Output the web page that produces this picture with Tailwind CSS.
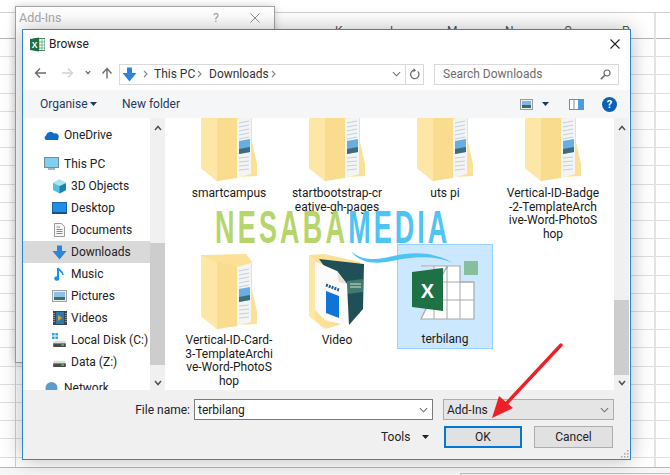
<!DOCTYPE html>
<html>
<head>
<meta charset="utf-8">
<script src="https://cdn.jsdelivr.net/npm/@tailwindcss/browser@4"></script>
</head>
<body class="m-0 bg-white">
<svg class="hidden" width="0" height="0">
  <defs>
    <symbol id="folder" viewBox="0 0 56 75">
      <path d="M0 1 L45 0 L51 8 V36 L56 58 V70 L38 71 L16 75 L0 62Z" fill="#fbe096"/>
      <path d="M36 13 L50 9 V68 L36 72Z" fill="#f4f4f4"/>
      <path d="M38 17 L48 15 M38 21 L48 19 M38 25 L48 23 M38 29 L48 27 M38 33 L48 31 M38 52 L48 51 M38 56 L48 55 M38 60 L48 59 M38 64 L48 63" stroke="#bcd2e4" stroke-width="1"/>
      <path d="M38 35 L49 33 V46 L38 48Z" fill="#69aee0"/>
      <path d="M38 43 L49 41 V46 L38 48Z" fill="#3d6c7c"/>
      <path d="M0 1 L16 8 V75 L0 62Z" fill="#fde6a6"/>
      <path d="M8 5 L36 13 V72 L16 75 V8Z" fill="#f9dc8e"/>
    </symbol>
    <symbol id="disk" viewBox="0 0 16 10">
      <path d="M2 3 H14 L15 5 V9 H1 V5Z" fill="#dcdcdc"/>
      <rect x="1" y="6" width="14" height="4" fill="#4a4a4a"/>
      <rect x="10" y="7" width="3" height="1.5" fill="#57d65f"/>
    </symbol>
    <symbol id="chevup" viewBox="0 0 8 6"><path d="M1 5 L4 1.5 L7 5" fill="none" stroke="#505050" stroke-width="1.5"/></symbol>
    <symbol id="chevdown" viewBox="0 0 8 6"><path d="M1 1 L4 4.5 L7 1" fill="none" stroke="#505050" stroke-width="1.5"/></symbol>
    <symbol id="chevthin" viewBox="0 0 10 6"><path d="M1 1 L5 5 L9 1" fill="none" stroke="#707070" stroke-width="1.2"/></symbol>
    <symbol id="crumb" viewBox="0 0 5 8"><path d="M1 1 L4 4 L1 7" fill="none" stroke="#8a8a8a" stroke-width="1.2"/></symbol>
  </defs>
</svg>

<div class="relative w-[670px] h-[475px] overflow-hidden bg-white font-['Roboto',sans-serif] text-[12px] text-[#222]">

  <!-- spreadsheet behind the dialogs -->
  <div class="flex flex-col h-full">
    <div class="h-[13px] shrink-0 border-b border-[#cfcfcf]"></div>
    <div class="relative h-[26px] shrink-0 border-b border-[#b4b4b4]">
      <span class="absolute left-[335px] top-[9px] text-[#555]">K</span>
      <span class="absolute left-[390px] top-[9px] text-[#555]">L</span>
      <span class="absolute left-[447px] top-[9px] text-[#555]">M</span>
      <span class="absolute left-[505px] top-[9px] text-[#555]">N</span>
      <span class="absolute left-[564px] top-[9px] text-[#555]">O</span>
      <span class="absolute left-[622px] top-[9px] text-[#555]">P</span>
    </div>
    <div class="flex-1 relative bg-[repeating-linear-gradient(to_bottom,transparent_0,transparent_17.2px,#dedede_17.2px,#dedede_18.2px)]">
      <div class="absolute left-[654px] top-[-26px] bottom-0 w-[2px] bg-[#e2e2e2]"></div>
      <div class="absolute left-[15px] top-0 bottom-0 w-px bg-[#d0d0d0]"></div>
    </div>
    <div class="relative h-[8px] shrink-0 border-t border-[#b8b8b8] bg-[#f6f6f6]">
      <div class="absolute left-[460px] top-[5px] right-0 h-[3px] border-t border-l border-[#bdbdbd]"></div>
    </div>
  </div>

  <!-- Add-Ins dialog behind -->
  <div class="absolute left-[15px] top-[6px] w-[260px] h-[357px] bg-white border border-[#a3a3a3] shadow-[0_0_8px_rgba(0,0,0,0.2)]">
    <div class="flex items-center h-[22px] pl-[3px] pr-[14px] text-[12.5px] text-[#a9a9a9]">
      <span class="flex-1">Add-Ins</span>
      <span class="mr-[31px] text-[#a0a0a0]">?</span>
      <svg width="10" height="10" viewBox="0 0 10 10"><path d="M0.5 0.5 L9.5 9.5 M9.5 0.5 L0.5 9.5" stroke="#8f8f8f" stroke-width="1"/></svg>
    </div>
  </div>

  <!-- Browse dialog -->
  <div class="absolute left-[22px] top-[29px] w-[609px] h-[431px] flex flex-col bg-white border border-[#2b88d0] shadow-[0_0_20px_rgba(0,0,0,0.28)]">
    <!-- title bar -->
    <div class="flex items-center h-[28px] shrink-0 pl-[7px] pr-[10px]">
      <svg width="15" height="15" viewBox="0 0 15 15" class="mr-[4px]">
        <rect x="5" y="1.5" width="10" height="12" fill="#fff" stroke="#1d7044" stroke-width="0.8"/>
        <path d="M9 2 V13 M12 2 V13 M5 5 H15 M5 8 H15 M5 11 H15" stroke="#4f9a72" stroke-width="0.7"/>
        <path d="M0 2 L9 0.5 V14.5 L0 13Z" fill="#1d7044"/>
        <text x="4.5" y="10.5" text-anchor="middle" font-size="8.5" font-weight="700" fill="#fff" font-family="Liberation Sans">X</text>
      </svg>
      <span class="flex-1">Browse</span>
      <svg width="10" height="10" viewBox="0 0 10 10"><path d="M0.5 0.5 L9.5 9.5 M9.5 0.5 L0.5 9.5" stroke="#222" stroke-width="1.1"/></svg>
    </div>
    <!-- address row -->
    <div class="flex items-center h-[32px] shrink-0">
      <div class="relative w-[96px] h-full shrink-0">
        <svg class="absolute left-[11px] top-[9px]" width="13" height="12" viewBox="0 0 13 12"><path d="M12 6 H2 M6 1.5 L1.5 6 L6 10.5" fill="none" stroke="#6b6b6b" stroke-width="1.4"/></svg>
        <svg class="absolute left-[38px] top-[9px]" width="13" height="12" viewBox="0 0 13 12"><path d="M1 6 H11 M7 1.5 L11.5 6 L7 10.5" fill="none" stroke="#d2d2d2" stroke-width="1.4"/></svg>
        <svg class="absolute left-[62px] top-[12px]" width="6" height="5"><use href="#chevdown"/></svg>
        <svg class="absolute left-[78px] top-[9px]" width="12" height="12" viewBox="0 0 12 12"><path d="M6 11.5 V2 M1.5 6.5 L6 1.5 L10.5 6.5" fill="none" stroke="#6b6b6b" stroke-width="1.4"/></svg>
      </div>
      <div class="flex items-center w-[305px] h-[21px] shrink-0 border border-[#d9d9d9] bg-white">
        <svg class="ml-[2px]" width="15" height="15" viewBox="0 0 15 15"><path d="M5 0.5 H10 V6 H14.5 L7.5 14.5 L0.5 6 H5Z" fill="#2e84d6"/></svg>
        <svg class="ml-[6px]" width="5" height="8"><use href="#crumb"/></svg>
        <span class="ml-[6px] w-[43px] text-[#333]">This PC</span>
        <svg width="5" height="8"><use href="#crumb"/></svg>
        <span class="ml-[7px] w-[62px] text-[#333]">Downloads</span>
        <svg width="5" height="8"><use href="#crumb"/></svg>
        <svg class="ml-auto mr-[4px]" width="9" height="6"><use href="#chevthin"/></svg>
        <div class="flex items-center justify-center w-[18px] h-full border-l border-[#d9d9d9]">
          <svg width="11" height="12" viewBox="0 0 11 12"><path d="M8.7 3.4 A4.2 4.2 0 1 1 5.5 2.2" fill="none" stroke="#6e6e6e" stroke-width="1.3"/><path d="M4.5 0 L7 2.2 L4.5 4.4Z" fill="#6e6e6e"/></svg>
        </div>
      </div>
      <div class="flex items-center justify-between w-[185px] h-[21px] ml-[10px] shrink-0 border border-[#d9d9d9] pl-[8px] pr-[7px] text-[#6d6d6d]">
        <span>Search Downloads</span>
        <svg width="11" height="11" viewBox="0 0 11 11"><circle cx="7" cy="4" r="3" fill="none" stroke="#666" stroke-width="1.2"/><path d="M4.8 6.2 L0.8 10.2" stroke="#666" stroke-width="1.6"/></svg>
      </div>
    </div>
    <!-- toolbar -->
    <div class="relative flex items-center h-[28px] shrink-0 bg-[#f5f6f7] text-[#1e395b]">
      <span class="ml-[17px] w-[46px]">Organise</span>
      <svg class="ml-[4px]" width="7" height="4" viewBox="0 0 7 4"><path d="M0 0 H7 L3.5 4Z" fill="#1e395b"/></svg>
      <span class="ml-[25px]">New folder</span>
      <div class="ml-auto flex items-center pr-[13px]">
        <svg width="13" height="11" viewBox="0 0 13 11"><rect x="0.5" y="0.5" width="12" height="10" fill="#eee" stroke="#9a9a9a"/><rect x="2" y="2" width="9" height="4" fill="#7fb7e0"/><rect x="2" y="6" width="9" height="3" fill="#3c6b5c"/></svg>
        <svg class="ml-[9px]" width="7" height="4" viewBox="0 0 7 4"><path d="M0 0 H7 L3.5 4Z" fill="#1e395b"/></svg>
        <svg class="ml-[20px]" width="15" height="11" viewBox="0 0 15 11"><rect x="0.5" y="0.5" width="14" height="10" fill="#fff" stroke="#8a8a8a"/><rect x="9" y="1" width="5" height="9" fill="#4c9be0"/><path d="M5 1 V10" stroke="#8a8a8a"/></svg>
        <div class="ml-[18px] flex items-center justify-center w-[15px] h-[15px] rounded-full bg-[#0a62b5] text-white text-[11px] font-bold leading-none">?</div>
      </div>
    </div>
    <!-- panes -->
    <div class="flex h-[272px] shrink-0 overflow-hidden">
      <!-- nav -->
      <div class="w-[127px] shrink-0 pt-[6px] text-[#222]">
        <div class="flex items-center h-[22px] pl-[21px]">
          <svg class="mr-[5px]" width="15" height="11" viewBox="0 0 15 11"><path d="M2 10 A2.5 2.5 0 0 1 2 5.5 A4.5 4.5 0 0 1 10 3.5 A3.5 3.5 0 0 1 14.5 8 L14 10Z" fill="#0f6fc6"/></svg>
          OneDrive
        </div>
        <div class="flex items-center h-[22px] mt-[7px] pl-[21px]">
          <svg class="mr-[5px]" width="15" height="14" viewBox="0 0 15 14"><rect x="0.5" y="0.5" width="14" height="10" fill="#7fd0f0" stroke="#7b8a94"/><rect x="4" y="11" width="7" height="2" fill="#aab4bb"/></svg>
          This PC
        </div>
        <div class="flex items-center h-[22px] pl-[29px]">
          <svg class="mr-[4px]" width="15" height="15" viewBox="0 0 15 15"><path d="M7.5 0.5 L14 4 V11 L7.5 14.5 L1 11 V4Z" fill="#4fc3dc"/><path d="M7.5 7 L14 4 V11 L7.5 14.5Z" fill="#1f7fb0"/><path d="M7.5 7 L1 4 L7.5 0.5 L14 4Z" fill="#a8e6f0"/></svg>
          3D Objects
        </div>
        <div class="flex items-center h-[22px] pl-[29px]">
          <svg class="mr-[4px]" width="15" height="12" viewBox="0 0 15 12"><rect x="0.5" y="0.5" width="14" height="10" fill="#1f8fe6" stroke="#1668ad"/><rect x="0" y="10" width="15" height="2" fill="#14508a"/></svg>
          Desktop
        </div>
        <div class="flex items-center h-[22px] pl-[31px]">
          <svg class="mr-[6px]" width="11" height="14" viewBox="0 0 11 14"><path d="M0.5 0.5 H7.5 L10.5 3.5 V13.5 H0.5Z" fill="#f7f7f7" stroke="#9a9a9a"/><path d="M2.5 4 H6 M2.5 6.5 H8.5 M2.5 8.5 H8.5 M2.5 10.5 H8.5" stroke="#5f90b8"/></svg>
          Documents
        </div>
        <div class="flex items-center h-[22px] pl-[29px] bg-[#d9d9d9]">
          <svg class="mr-[4px]" width="15" height="15" viewBox="0 0 15 15"><path d="M5 0.5 H10 V6 H14.5 L7.5 14.5 L0.5 6 H5Z" fill="#2e84d6"/></svg>
          Downloads
        </div>
        <div class="flex items-center h-[22px] pl-[31px]">
          <svg class="mr-[6px]" width="11" height="15" viewBox="0 0 11 15"><path d="M4 1 V11" stroke="#1d8fe6" stroke-width="2"/><ellipse cx="2.8" cy="11.5" rx="2.6" ry="2.2" fill="#1d8fe6"/><path d="M4 1 C5 4 9 4 9 8" fill="none" stroke="#1d8fe6" stroke-width="1.6"/></svg>
          Music
        </div>
        <div class="flex items-center h-[22px] pl-[29px]">
          <svg class="mr-[4px]" width="15" height="12" viewBox="0 0 15 12"><rect x="0.5" y="0.5" width="14" height="11" fill="#eee" stroke="#a0a0a0"/><rect x="2" y="2" width="11" height="5" fill="#8cc0e8"/><rect x="2" y="7" width="11" height="3" fill="#3f6f5e"/></svg>
          Pictures
        </div>
        <div class="flex items-center h-[22px] pl-[30px]">
          <svg class="mr-[4px]" width="14" height="14" viewBox="0 0 14 14"><rect width="14" height="14" fill="#3c4650"/><rect x="3" y="1" width="8" height="12" fill="#2e78b0"/><path d="M5 4 L9 7 L5 10Z" fill="#e0a030"/><path d="M1 2 V12 M13 2 V12" stroke="#ddd" stroke-width="1" stroke-dasharray="1 1"/></svg>
          Videos
        </div>
        <div class="flex items-center h-[22px] pl-[29px]">
          <span class="relative mr-[4px] block w-[15px] h-[14px]">
            <svg class="absolute left-0 top-0" width="6" height="6" viewBox="0 0 6 6"><path d="M0 0 H2.6 V2.6 H0Z M3.4 0 H6 V2.6 H3.4Z M0 3.4 H2.6 V6 H0Z M3.4 3.4 H6 V6 H3.4Z" fill="#2aa3e8"/></svg>
            <svg class="absolute left-0 bottom-0" width="15" height="9"><use href="#disk"/></svg>
          </span>
          Local Disk (C:)
        </div>
        <div class="flex items-center h-[22px] pl-[29px]">
          <svg class="mr-[4px]" width="15" height="9"><use href="#disk"/></svg>
          Data (Z:)
        </div>
        <div class="flex items-center h-[22px] mt-[4px] pl-[21px]">
          <svg class="mr-[5px]" width="15" height="15" viewBox="0 0 15 15"><circle cx="7.5" cy="7" r="6" fill="#5b9bd0"/><path d="M1 11 H14 V15 H1Z" fill="#8a9aa6"/></svg>
          Network
        </div>
      </div>
      <!-- nav scrollbar -->
      <div class="relative w-[15px] shrink-0 bg-[#f0f0f0]">
        <svg class="absolute left-[4px] top-[7px]" width="8" height="6"><use href="#chevup"/></svg>
        <div class="absolute left-0 right-0 top-[125px] h-[122px] bg-[#cdcdcd]"></div>
        <svg class="absolute left-[4px] bottom-[4px]" width="8" height="6"><use href="#chevdown"/></svg>
      </div>
      <!-- file area -->
      <div class="relative w-[449px] shrink-0 overflow-hidden">
        <div class="grid grid-cols-[96px_96px_96px_96px] gap-x-[12px] auto-rows-[148px] pl-[16px] mt-[-22px] text-[#1a1a1a] leading-[13.7px] text-center">
          <div class="pt-[10px] flex flex-col items-center">
            <svg class="ml-[-1px]" width="56" height="75"><use href="#folder"/></svg>
            <span class="mt-[6px]">smartcampus</span>
          </div>
          <div class="pt-[10px] flex flex-col items-center">
            <svg class="ml-[-1px]" width="56" height="75"><use href="#folder"/></svg>
            <span class="mt-[6px]">startbootstrap-cr<br>eative-gh-pages</span>
          </div>
          <div class="pt-[10px] flex flex-col items-center">
            <svg class="ml-[-1px]" width="56" height="75"><use href="#folder"/></svg>
            <span class="mt-[6px]">uts pi</span>
          </div>
          <div class="pt-[10px] flex flex-col items-center">
            <svg class="ml-[-1px]" width="56" height="75"><use href="#folder"/></svg>
            <span class="mt-[6px] whitespace-nowrap">Vertical-ID-Badge<br>-2-TemplateArch<br>ive-Word-PhotoS<br>hop</span>
          </div>
          <div class="pt-[10px] flex flex-col items-center">
            <svg class="ml-[-1px]" width="56" height="75"><use href="#folder"/></svg>
            <span class="mt-[5px] whitespace-nowrap">Vertical-ID-Card-<br>3-TemplateArchi<br>ve-Word-PhotoS<br>hop</span>
          </div>
          <div class="pt-[10px] flex flex-col items-center">
            <svg class="ml-[-1px]" width="56" height="75" viewBox="0 0 56 75">
              <path d="M0 1 L15 0 L51 8 V60 L30 71 L16 75 L0 62Z" fill="#fbe096"/>
              <path d="M10 5 L55 10 L54 55 L40 71 L28 30Z" fill="#1f5058"/>
              <path d="M38 27 L54 25 V38 L38 40Z" fill="#3f7a6c"/>
              <path d="M41 30 H52 M41 33 H52" stroke="#cfe3d8" stroke-width="1"/>
              <path d="M5 7 L28 17 L38 30 L40 72 L16 66 L5 55Z" fill="#fbfbfb"/>
              <path d="M17 37 L30 42 V64 L17 59Z" fill="#0f74d8"/>
              <path d="M17 31 L30 36" stroke="#1f5f8a" stroke-width="3" stroke-dasharray="2 1"/>
              <path d="M28 17 L38 30 L30 28Z" fill="#e8e2cc"/>
              <path d="M0 1 L6 5 V66 L16 75 L0 62Z" fill="#fde6a6"/>
            </svg>
            <span class="mt-[5px]">Video</span>
          </div>
          <div class="relative pt-[10px] h-[105px] flex flex-col items-center bg-[#cce8ff] border border-[#99d1ff] box-border">
            <svg class="absolute left-[13px] top-[15px]" width="68" height="62" viewBox="0 0 68 62">
              <path d="M10 6 H36 V9 M36 6 H49 V22 H63 V59 H10Z" fill="#fff" stroke="#a8a8a8" stroke-width="1.2"/>
              <path d="M23 6 V59 M36 6 V59 M49 22 V59 M10 22 H63 M10 40 H63" stroke="#a8a8a8" stroke-width="1"/>
              <rect x="53" y="1" width="14" height="14" fill="#85bf9e"/>
              <path d="M1 12 L32 8 V51 L1 47Z" fill="#1e7145"/>
              <text x="16.5" y="38" text-anchor="middle" font-size="20" font-weight="700" fill="#fff" font-family="Liberation Sans">X</text>
            </svg>
            <span class="absolute left-0 right-0 top-[88px]">terbilang</span>
          </div>
        </div>
      </div>
      <!-- right scrollbar -->
      <div class="relative w-[15px] shrink-0 bg-[#f0f0f0]">
        <svg class="absolute left-[4px] top-[7px]" width="8" height="6"><use href="#chevup"/></svg>
        <div class="absolute left-0 right-0 top-[182px] h-[75px] bg-[#cdcdcd]"></div>
        <svg class="absolute left-[4px] bottom-[4px]" width="8" height="6"><use href="#chevdown"/></svg>
      </div>
    </div>
    <!-- footer -->
    <div class="relative flex-1 bg-[#f0f0f0] text-[#222]">
      <div class="flex items-center mt-[9px] h-[21px]">
        <span class="w-[167px] text-right">File name:</span>
        <div class="flex items-center justify-between ml-[4px] w-[239px] h-[21px] border border-[#7a7a7a] bg-white pl-[3px] pr-[4px]">
          <span>terbilang</span>
          <svg width="9" height="6"><use href="#chevthin"/></svg>
        </div>
        <div class="flex items-center justify-between ml-[10px] w-[171px] h-[21px] border border-[#adadad] bg-[#e5e5e5] pl-[3px] pr-[4px]">
          <span>Add-Ins</span>
          <svg width="9" height="6"><use href="#chevthin"/></svg>
        </div>
      </div>
      <div class="flex items-center mt-[6px] h-[22px]">
        <span class="ml-[358px] w-[26px]">Tools</span>
        <svg class="ml-[15px]" width="7" height="4" viewBox="0 0 7 4"><path d="M0 0 H7 L3.5 4Z" fill="#222"/></svg>
        <div class="flex items-center justify-center ml-[15px] w-[78px] h-[22px] border-2 border-[#0078d7] bg-[#e1e1e1]">OK</div>
        <div class="flex items-center justify-center ml-[12px] w-[79px] h-[22px] border border-[#adadad] bg-[#e1e1e1]">Cancel</div>
      </div>
      <svg class="absolute right-[1px] bottom-[1px]" width="9" height="9" viewBox="0 0 9 9"><path d="M7 1 h1.5 v1.5 h-1.5Z M4 4 h1.5 v1.5 h-1.5Z M7 4 h1.5 v1.5 h-1.5Z M1 7 h1.5 v1.5 h-1.5Z M4 7 h1.5 v1.5 h-1.5Z M7 7 h1.5 v1.5 h-1.5Z" fill="#a8a8a8"/></svg>
    </div>
  </div>

  <!-- watermark -->
  <div class="absolute left-[215px] top-[213px] flex h-[31px] font-['Liberation_Sans',sans-serif] text-[27px] font-bold leading-[31px] whitespace-nowrap scale-y-[1.72]">
    <span class="block tracking-[3.2px] text-[#b6d56c]">NESABA</span>
    <span class="block tracking-[3px] text-[#4fc4f2]">MEDIA</span>
  </div>
  <svg class="absolute left-[350px] top-[245px]" width="104" height="20" viewBox="0 0 104 20">
    <path d="M1 5 C5 12 18 16 34 13 C52 9 78 3 103 18 C80 8 56 13 36 17 C18 20 5 14 1 5Z" fill="#4fc4f2"/>
  </svg>

  <!-- red arrow -->
  <svg class="absolute left-[485px] top-[340px]" width="85" height="85" viewBox="0 0 85 85">
    <path d="M76 5 L20 65" stroke="#ee2027" stroke-width="3.4" stroke-linecap="round"/>
    <path d="M7 78 L14 56 L28 68Z" fill="#ee2027"/>
  </svg>
</div>
</body>
</html>
